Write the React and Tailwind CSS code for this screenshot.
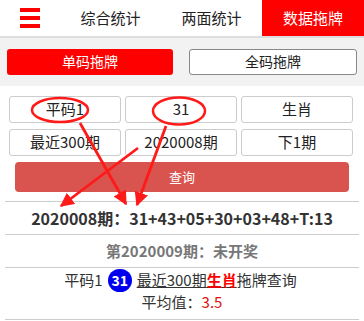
import React from "react";

const FONT = { fontFamily: '"Microsoft YaHei", "Noto Sans CJK SC", "Noto Sans", sans-serif' };

function Cell({ children }) {
  return (
    <div className="flex h-[27px] items-center justify-center rounded-[3px] border border-[#cccccc] bg-white text-[15px] text-[#222]">
      {children}
    </div>
  );
}

function Marks() {
  const red = "#ff1a1a";
  return (
    <svg className="pointer-events-none absolute left-0 top-0" width="364" height="321" viewBox="0 0 364 321">
      <defs>
        <marker id="head" viewBox="0 0 10 10" refX="9" refY="5" markerWidth="5" markerHeight="5" orient="auto-start-reverse">
          <path d="M0 0 L10 5 L0 10 z" fill={red} />
        </marker>
      </defs>
      <ellipse cx="60" cy="110" rx="28" ry="12" fill="none" stroke={red} strokeWidth="2.5" />
      <ellipse cx="179" cy="111" rx="26" ry="13.5" fill="none" stroke={red} strokeWidth="2.5" />
      <line x1="80" y1="123" x2="126" y2="204" stroke={red} strokeWidth="2.8" markerEnd="url(#head)" />
      <line x1="138" y1="148" x2="61" y2="206" stroke={red} strokeWidth="2.8" markerEnd="url(#head)" />
      <line x1="166" y1="126" x2="137" y2="205" stroke={red} strokeWidth="2.8" markerEnd="url(#head)" />
    </svg>
  );
}

export default function App() {
  return (
    <div className="relative h-[321px] w-[364px] overflow-hidden bg-white" style={FONT}>
      <div className="flex h-[38px] border-b-2 border-[#dddddd]">
        <div className="flex w-[60px] flex-col items-center justify-center gap-[4px] pl-[1px] pr-[2px]">
          <span className="block h-[4px] w-[20px] bg-[#ff0000]" />
          <span className="block h-[4px] w-[20px] bg-[#ff0000]" />
          <span className="block h-[4px] w-[20px] bg-[#ff0000]" />
        </div>
        <div className="flex w-[101px] items-center justify-center text-[15px] text-[#222]">综合统计</div>
        <div className="flex w-[101px] items-center justify-center text-[15px] text-[#222]">两面统计</div>
        <div className="flex flex-1 items-center justify-center bg-[#ff0000] text-[15px] text-white">数据拖牌</div>
      </div>

      <div className="flex h-[48px] items-center gap-[16px] bg-[#f2f2f2] px-[7px] pb-[1px]">
        <div className="flex h-[26px] flex-1 items-center justify-center rounded-[3px] bg-[#ff0000] text-[14px] text-white">单码拖牌</div>
        <div className="flex h-[26px] flex-1 items-center justify-center rounded-[3px] border border-[#888] bg-white text-[14px] text-[#222]">全码拖牌</div>
      </div>

      <div className="grid grid-cols-[112px_112px_112px] gap-x-[4px] gap-y-[6px] pl-[9px] pt-[10px]">
        <Cell>平码1</Cell>
        <Cell>31</Cell>
        <Cell>生肖</Cell>
        <Cell>最近300期</Cell>
        <Cell>2020008期</Cell>
        <Cell>下1期</Cell>
      </div>

      <div className="mx-[15px] mt-[6px] flex h-[30px] items-center justify-center rounded-[4px] bg-[#d9534f] text-[13px] text-white">
        查询
      </div>

      <div className="mx-[5px] mt-[9px] border-t border-[#cccccc]" />
      <div className="flex h-[32px] items-center justify-center text-[16px] font-bold text-[#333]">
        2020008期：31+43+05+30+03+48+T:13
      </div>
      <div className="mx-[5px] border-t border-[#cccccc]" />
      <div className="flex h-[32px] items-center justify-center text-[15px] font-bold text-[#777]">
        第2020009期：未开奖
      </div>
      <div className="mx-[5px] border-t border-[#cccccc]" />
      <div className="flex flex-col items-center pt-[1px] text-[15px] text-[#333]">
        <div className="flex h-[22px] items-center gap-[5px] pr-[3px]">
          <span>平码1</span>
          <span className="flex h-[23px] w-[24px] items-center justify-center rounded-full bg-[#0000ee] text-[14px] font-bold text-white">31</span>
          <span className="underline">
            最近300期<span className="font-bold text-[#ff0000]">生肖</span>
          </span>
          <span className="-ml-[5px]">拖牌查询</span>
        </div>
        <div className="h-[22px] leading-[22px]">
          平均值：<span className="text-[#e01010]">3.5</span>
        </div>
      </div>
      <div className="mx-[5px] mt-[6px] border-t border-[#cccccc]" />

      <Marks />
    </div>
  );
}
